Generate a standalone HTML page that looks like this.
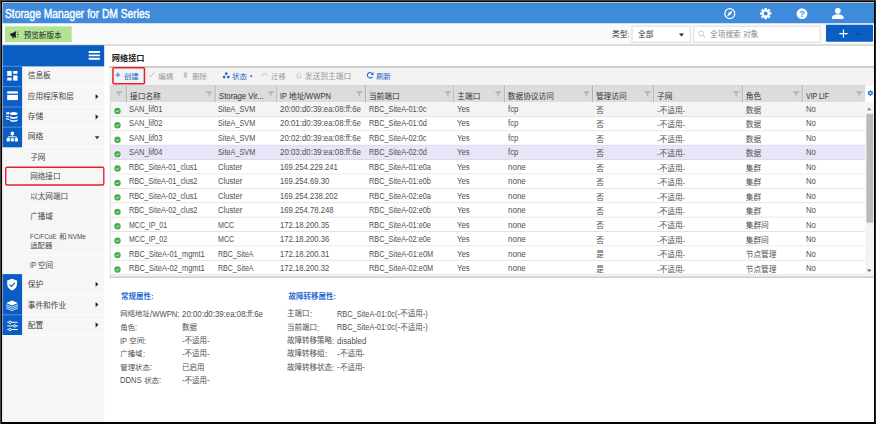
<!DOCTYPE html>
<html lang="zh-CN"><head><meta charset="utf-8"><title>Storage Manager for DM Series</title>
<style>
html,body{margin:0;padding:0;}
body{width:876px;height:424px;overflow:hidden;background:#000;position:relative;
 font-family:"Liberation Sans","Noto Sans CJK SC",sans-serif;font-size:8px;color:#505050;}
#app *{position:absolute;box-sizing:border-box;white-space:nowrap;}
#app{position:absolute;left:2px;top:2px;width:872px;height:420px;background:#fff;overflow:hidden;}
#app .t{line-height:12px;height:12px;}
#b0{position:absolute;left:0;top:0;width:876px;height:1px;background:#454545;}
#b1{position:absolute;left:0;top:0;width:1px;height:424px;background:#454545;}
#b2{position:absolute;left:875px;top:0;width:1px;height:423px;background:#262626;}
</style></head><body><div id="b0"></div><div id="b1"></div><div id="b2"></div><div id="app">
<svg style="left:0;top:0" width="872" height="420" viewBox="2 2 872 420">
<rect x="2" y="2" width="872" height="21.5" rx="0" fill="#3f8bdb"/>
<rect x="2" y="2" width="872" height="1" rx="0" fill="#c3c9d0"/>
<rect x="2" y="3" width="872" height="1" rx="0" fill="#3886dc"/>
<rect x="2" y="23.5" width="872" height="21" rx="0" fill="#fafafa"/>
<rect x="5" y="26.3" width="66.7" height="15.8" rx="0" fill="#b2e394"/>
<g transform="translate(10.3 30.3)"><path d="M.2 3h2L5.500 .6v7.200L2.200 5.600H.2z" fill="#1a1a1a"/><path d="M2.400 5.600l.6 2.400" stroke="#1a1a1a" stroke-width="1.200"/><path d="M6.600 2.300l1.400-.9M6.800 4.200h1.800M6.600 6.100l1.400.9" stroke="#333" stroke-width=".8" fill="none"/></g>
<rect x="632" y="26.2" width="58.2" height="16" rx="0" fill="#fff" stroke="#dcdcdc" stroke-width="1"/>
<g transform="translate(679 33.4)"><path d="M0 0h5l-2.500 3z" fill="#222"/></g>
<rect x="693.8" y="26.2" width="126.4" height="16" rx="0" fill="#fff" stroke="#dcdcdc" stroke-width="1"/>
<g transform="translate(698 30.3)"><circle cx="3.200" cy="3.200" r="2.500" fill="none" stroke="#bbb" stroke-width=".8"/><path d="M5 5L7.500 7.500" stroke="#bbb" stroke-width=".8"/></g>
<rect x="826" y="24.7" width="47" height="17" rx="1" fill="#0a5dc2"/>
<g transform="translate(839 29.1)"><path d="M4.500 .3v8.400M.3 4.500h8.400" stroke="#fff" stroke-width="1.200"/></g>
<g transform="translate(855.4 33)"><path d="M0 0h4.400l-2.200 2.600z" fill="#26426a"/></g>
<rect x="2" y="44.2" width="872" height="1.7" rx="0" fill="#d8d8d8"/>
<rect x="2" y="45.4" width="102.2" height="377" rx="0" fill="#f6f6f6"/>
<rect x="2" y="45.2" width="102.2" height="21.2" rx="0" fill="#0a5dc2"/>
<g transform="translate(88.7 51)"><path d="M0 1h11.200M0 4.400h11.200M0 7.800h11.200" stroke="#fff" stroke-width="1.900"/></g>
<rect x="2" y="66.1" width="20.1" height="20.9" rx="0" fill="#0a5dc2"/>
<rect x="2" y="65.7" width="20.1" height="1.2" rx="0" fill="#4587d6"/>
<rect x="22.1" y="85.6" width="82.1" height="1" rx="0" fill="#fdfdfd"/>
<rect x="2" y="86.4" width="20.1" height="20.9" rx="0" fill="#0a5dc2"/>
<rect x="2" y="86" width="20.1" height="1.2" rx="0" fill="#4587d6"/>
<rect x="22.1" y="105.9" width="82.1" height="1" rx="0" fill="#fdfdfd"/>
<g transform="translate(95.6 93.95)"><path d="M0 0l2.800 2.600L0 5.200z" fill="#222"/></g>
<rect x="2" y="106.7" width="20.1" height="20.9" rx="0" fill="#0a5dc2"/>
<rect x="2" y="106.3" width="20.1" height="1.2" rx="0" fill="#4587d6"/>
<rect x="22.1" y="126.2" width="82.1" height="1" rx="0" fill="#fdfdfd"/>
<g transform="translate(95.6 114.25)"><path d="M0 0l2.800 2.600L0 5.200z" fill="#222"/></g>
<rect x="2" y="127" width="20.1" height="20.3" rx="0" fill="#0a5dc2"/>
<rect x="2" y="126.6" width="20.1" height="1.2" rx="0" fill="#4587d6"/>
<rect x="22.1" y="146.5" width="82.1" height="1" rx="0" fill="#fdfdfd"/>
<g transform="translate(94.8 136.35)"><path d="M0 0h4.600l-2.300 2.800z" fill="#333"/></g>
<rect x="2" y="274.1" width="20.1" height="20.9" rx="0" fill="#0a5dc2"/>
<rect x="22.1" y="293.6" width="82.1" height="1" rx="0" fill="#fdfdfd"/>
<g transform="translate(95.6 281.65)"><path d="M0 0l2.800 2.600L0 5.200z" fill="#222"/></g>
<rect x="2" y="294.4" width="20.1" height="20.9" rx="0" fill="#0a5dc2"/>
<rect x="22.1" y="313.9" width="82.1" height="1" rx="0" fill="#fdfdfd"/>
<g transform="translate(95.6 301.95)"><path d="M0 0l2.800 2.600L0 5.200z" fill="#222"/></g>
<rect x="2" y="314.6" width="20.1" height="20.4" rx="0" fill="#0a5dc2"/>
<rect x="2" y="314.2" width="20.1" height="1.2" rx="0" fill="#4587d6"/>
<rect x="22.1" y="334.2" width="82.1" height="1" rx="0" fill="#fdfdfd"/>
<g transform="translate(95.6 322.2)"><path d="M0 0l2.800 2.600L0 5.200z" fill="#222"/></g>
<rect x="22.1" y="166.5" width="82.1" height="1" rx="0" fill="#fcfcfc"/>
<rect x="22.1" y="186.2" width="82.1" height="1" rx="0" fill="#fcfcfc"/>
<rect x="22.1" y="205.9" width="82.1" height="1" rx="0" fill="#fcfcfc"/>
<rect x="22.1" y="225.6" width="82.1" height="1" rx="0" fill="#fcfcfc"/>
<rect x="22.1" y="254.6" width="82.1" height="1" rx="0" fill="#fcfcfc"/>
<rect x="5.7" y="167.2" width="98.1" height="17.8" rx="1.500" fill="none" stroke="#e8202a" stroke-width="1.4"/>
<rect x="109" y="67.2" width="765" height="18.5" rx="0" fill="#f3f3f3"/>
<rect x="109" y="65.9" width="765" height="2" rx="0" fill="#cdcdcd"/>
<rect x="112.95" y="67.75" width="31.5" height="16" rx="1" fill="none" stroke="#e8202a" stroke-width="1.5"/>
<g transform="translate(115.6 72.6)"><path d="M2.300 0v4.600M0 2.300h4.600" stroke="#2a78d8" stroke-width="1"/></g>
<g transform="translate(149 72)"><path d="M.5 5.500L5.500 .5" stroke="#bbb" stroke-width="1"/></g>
<g transform="translate(183.5 72)"><rect x=".3" y=".3" width="3.400" height="5.400" fill="#c4c4c4"/></g>
<g transform="translate(222.6 72.2)"><g fill="#1a6fd0"><circle cx="3.600" cy="1.500" r="1.400"/><circle cx="1.500" cy="4.900" r="1.400"/><circle cx="5.700" cy="4.900" r="1.400"/></g></g>
<g transform="translate(249.7 75.5)"><path d="M0 0h3l-1.500 2z" fill="#1560c0"/></g>
<g transform="translate(262 72.5)"><path d="M.5 4.500V1.500h4.500v2" stroke="#c8c8c8" stroke-width=".9" fill="none"/></g>
<g transform="translate(296 72.3)"><path d="M.3 3L3 .5 5.700 3M1.200 2.800v2.700h3.600V2.800" stroke="#c0c0c0" stroke-width=".8" fill="none"/></g>
<g transform="translate(366.5 71.7)"><path d="M5.900 4.900a2.700 2.700 0 1 1-.1-2.900" stroke="#1a6fd0" stroke-width="1.100" fill="none"/><path d="M7 .4v2.800H4.200z" fill="#1a6fd0"/></g>
<rect x="110.3" y="85.5" width="763.2" height="191.8" rx="0" fill="#fff" stroke="#d2d2d2" stroke-width="1"/>
<rect x="110.8" y="85.6" width="754.6" height="16.7" rx="0" fill="#dcdcdc"/>
<g transform="translate(115.2 91.2)"><path d="M0 0h7.400L4.400 2.900v2.300L3 4.500V2.900z" fill="#b4b4b4"/></g>
<rect x="126.1" y="85.6" width="1" height="16.7" rx="0" fill="#b0b0b0"/>
<rect x="127.1" y="85.6" width="0.8" height="16.7" rx="0" fill="#e6e6e6"/>
<g transform="translate(205.5 91.2)"><path d="M0 0h7.400L4.400 2.900v2.300L3 4.500V2.900z" fill="#b4b4b4"/></g>
<rect x="214.8" y="85.6" width="1" height="16.7" rx="0" fill="#b0b0b0"/>
<rect x="215.8" y="85.6" width="0.8" height="16.7" rx="0" fill="#e6e6e6"/>
<g transform="translate(267.1 91.2)"><path d="M0 0h7.400L4.400 2.900v2.300L3 4.500V2.900z" fill="#b4b4b4"/></g>
<rect x="276.4" y="85.6" width="1" height="16.7" rx="0" fill="#b0b0b0"/>
<rect x="277.4" y="85.6" width="0.8" height="16.7" rx="0" fill="#e6e6e6"/>
<g transform="translate(355.7 91.2)"><path d="M0 0h7.400L4.400 2.900v2.300L3 4.500V2.900z" fill="#b4b4b4"/></g>
<rect x="365" y="85.6" width="1" height="16.7" rx="0" fill="#b0b0b0"/>
<rect x="366" y="85.6" width="0.8" height="16.7" rx="0" fill="#e6e6e6"/>
<g transform="translate(444.1 91.2)"><path d="M0 0h7.400L4.400 2.900v2.300L3 4.500V2.900z" fill="#b4b4b4"/></g>
<rect x="453.4" y="85.6" width="1" height="16.7" rx="0" fill="#b0b0b0"/>
<rect x="454.4" y="85.6" width="0.8" height="16.7" rx="0" fill="#e6e6e6"/>
<g transform="translate(494.6 91.2)"><path d="M0 0h7.400L4.400 2.900v2.300L3 4.500V2.900z" fill="#b4b4b4"/></g>
<rect x="503.9" y="85.6" width="1" height="16.7" rx="0" fill="#b0b0b0"/>
<rect x="504.9" y="85.6" width="0.8" height="16.7" rx="0" fill="#e6e6e6"/>
<g transform="translate(582.7 91.2)"><path d="M0 0h7.400L4.400 2.900v2.300L3 4.500V2.900z" fill="#b4b4b4"/></g>
<rect x="592" y="85.6" width="1" height="16.7" rx="0" fill="#b0b0b0"/>
<rect x="593" y="85.6" width="0.8" height="16.7" rx="0" fill="#e6e6e6"/>
<g transform="translate(643.9 91.2)"><path d="M0 0h7.400L4.400 2.900v2.300L3 4.500V2.900z" fill="#b4b4b4"/></g>
<rect x="653.2" y="85.6" width="1" height="16.7" rx="0" fill="#b0b0b0"/>
<rect x="654.2" y="85.6" width="0.8" height="16.7" rx="0" fill="#e6e6e6"/>
<g transform="translate(732.6 91.2)"><path d="M0 0h7.400L4.400 2.900v2.300L3 4.500V2.900z" fill="#b4b4b4"/></g>
<rect x="741.9" y="85.6" width="1" height="16.7" rx="0" fill="#b0b0b0"/>
<rect x="742.9" y="85.6" width="0.8" height="16.7" rx="0" fill="#e6e6e6"/>
<g transform="translate(792.5 91.2)"><path d="M0 0h7.400L4.400 2.900v2.300L3 4.500V2.900z" fill="#b4b4b4"/></g>
<rect x="801.8" y="85.6" width="1" height="16.7" rx="0" fill="#b0b0b0"/>
<rect x="802.8" y="85.6" width="0.8" height="16.7" rx="0" fill="#e6e6e6"/>
<g transform="translate(855.6 91.2)"><path d="M0 0h7.400L4.400 2.900v2.300L3 4.500V2.900z" fill="#b4b4b4"/></g>
<rect x="865.4" y="85.3" width="8.6" height="17.1" rx="0" fill="#fff"/>
<g transform="translate(870.4 93.1)"><g fill="#1a6fd0"><circle r="1.900"/><rect x="-.75" y="-2.700" width="1.500" height="5.400"/><rect x="-.75" y="-2.700" width="1.500" height="5.400" transform="rotate(60)"/><rect x="-.75" y="-2.700" width="1.500" height="5.400" transform="rotate(120)"/></g><circle r=".9" fill="#fff"/></g>
<rect x="110.8" y="102.6" width="754.6" height="14.38" rx="0" fill="#f4f4f4"/>
<rect x="110.8" y="116.08" width="754.6" height="1" rx="0" fill="#e0e0e0"/>
<g transform="translate(114.6 107.99)"><circle cx="2.900" cy="2.900" r="3.900" fill="#fff" opacity=".8"/><circle cx="2.900" cy="2.900" r="3.200" fill="#43ad4b"/><path d="M1.500 3l1 1 1.800-2" stroke="#fff" stroke-width=".8" fill="none"/></g>
<rect x="110.8" y="116.98" width="754.6" height="14.38" rx="0" fill="#fff"/>
<rect x="110.8" y="130.46" width="754.6" height="1" rx="0" fill="#e0e0e0"/>
<g transform="translate(114.6 122.41)"><circle cx="2.900" cy="2.900" r="3.900" fill="#fff" opacity=".8"/><circle cx="2.900" cy="2.900" r="3.200" fill="#43ad4b"/><path d="M1.500 3l1 1 1.800-2" stroke="#fff" stroke-width=".8" fill="none"/></g>
<rect x="110.8" y="131.36" width="754.6" height="14.38" rx="0" fill="#fff"/>
<rect x="110.8" y="144.84" width="754.6" height="1" rx="0" fill="#d9d5e8"/>
<g transform="translate(114.6 136.83)"><circle cx="2.900" cy="2.900" r="3.900" fill="#fff" opacity=".8"/><circle cx="2.900" cy="2.900" r="3.200" fill="#43ad4b"/><path d="M1.500 3l1 1 1.800-2" stroke="#fff" stroke-width=".8" fill="none"/></g>
<rect x="110.8" y="145.74" width="754.6" height="14.38" rx="0" fill="#e9e5f8"/>
<rect x="110.8" y="159.22" width="754.6" height="1" rx="0" fill="#d9d5e8"/>
<g transform="translate(114.6 151.25)"><circle cx="2.900" cy="2.900" r="3.900" fill="#fff" opacity=".8"/><circle cx="2.900" cy="2.900" r="3.200" fill="#43ad4b"/><path d="M1.500 3l1 1 1.800-2" stroke="#fff" stroke-width=".8" fill="none"/></g>
<rect x="110.8" y="160.12" width="754.6" height="14.38" rx="0" fill="#fff"/>
<rect x="110.8" y="173.6" width="754.6" height="1" rx="0" fill="#e0e0e0"/>
<g transform="translate(114.6 165.67)"><circle cx="2.900" cy="2.900" r="3.900" fill="#fff" opacity=".8"/><circle cx="2.900" cy="2.900" r="3.200" fill="#43ad4b"/><path d="M1.500 3l1 1 1.800-2" stroke="#fff" stroke-width=".8" fill="none"/></g>
<rect x="110.8" y="174.5" width="754.6" height="14.38" rx="0" fill="#fff"/>
<rect x="110.8" y="187.98" width="754.6" height="1" rx="0" fill="#e0e0e0"/>
<g transform="translate(114.6 180.09)"><circle cx="2.900" cy="2.900" r="3.900" fill="#fff" opacity=".8"/><circle cx="2.900" cy="2.900" r="3.200" fill="#43ad4b"/><path d="M1.500 3l1 1 1.800-2" stroke="#fff" stroke-width=".8" fill="none"/></g>
<rect x="110.8" y="188.88" width="754.6" height="14.38" rx="0" fill="#fff"/>
<rect x="110.8" y="202.36" width="754.6" height="1" rx="0" fill="#e0e0e0"/>
<g transform="translate(114.6 194.51)"><circle cx="2.900" cy="2.900" r="3.900" fill="#fff" opacity=".8"/><circle cx="2.900" cy="2.900" r="3.200" fill="#43ad4b"/><path d="M1.500 3l1 1 1.800-2" stroke="#fff" stroke-width=".8" fill="none"/></g>
<rect x="110.8" y="203.26" width="754.6" height="14.38" rx="0" fill="#fff"/>
<rect x="110.8" y="216.74" width="754.6" height="1" rx="0" fill="#e0e0e0"/>
<g transform="translate(114.6 208.93)"><circle cx="2.900" cy="2.900" r="3.900" fill="#fff" opacity=".8"/><circle cx="2.900" cy="2.900" r="3.200" fill="#43ad4b"/><path d="M1.500 3l1 1 1.800-2" stroke="#fff" stroke-width=".8" fill="none"/></g>
<rect x="110.8" y="217.64" width="754.6" height="14.38" rx="0" fill="#fff"/>
<rect x="110.8" y="231.12" width="754.6" height="1" rx="0" fill="#e0e0e0"/>
<g transform="translate(114.6 223.35)"><circle cx="2.900" cy="2.900" r="3.900" fill="#fff" opacity=".8"/><circle cx="2.900" cy="2.900" r="3.200" fill="#43ad4b"/><path d="M1.500 3l1 1 1.800-2" stroke="#fff" stroke-width=".8" fill="none"/></g>
<rect x="110.8" y="232.02" width="754.6" height="14.38" rx="0" fill="#fff"/>
<rect x="110.8" y="245.5" width="754.6" height="1" rx="0" fill="#e0e0e0"/>
<g transform="translate(114.6 237.77)"><circle cx="2.900" cy="2.900" r="3.900" fill="#fff" opacity=".8"/><circle cx="2.900" cy="2.900" r="3.200" fill="#43ad4b"/><path d="M1.500 3l1 1 1.800-2" stroke="#fff" stroke-width=".8" fill="none"/></g>
<rect x="110.8" y="246.4" width="754.6" height="14.38" rx="0" fill="#fff"/>
<rect x="110.8" y="259.88" width="754.6" height="1" rx="0" fill="#e0e0e0"/>
<g transform="translate(114.6 252.19)"><circle cx="2.900" cy="2.900" r="3.900" fill="#fff" opacity=".8"/><circle cx="2.900" cy="2.900" r="3.200" fill="#43ad4b"/><path d="M1.500 3l1 1 1.800-2" stroke="#fff" stroke-width=".8" fill="none"/></g>
<rect x="110.8" y="260.78" width="754.6" height="14.38" rx="0" fill="#fff"/>
<rect x="110.8" y="274.26" width="754.6" height="1" rx="0" fill="#e0e0e0"/>
<g transform="translate(114.6 266.61)"><circle cx="2.900" cy="2.900" r="3.900" fill="#fff" opacity=".8"/><circle cx="2.900" cy="2.900" r="3.200" fill="#43ad4b"/><path d="M1.500 3l1 1 1.800-2" stroke="#fff" stroke-width=".8" fill="none"/></g>
<rect x="865.4" y="102.3" width="8.6" height="174.7" rx="0" fill="#f3f3f3"/>
<rect x="866.4" y="113.8" width="6.8" height="108.9" rx="0" fill="#b9b9b9"/>
<g transform="translate(867 107.8)"><path d="M0 2.400h4.400L2.200 0z" fill="#808080"/></g>
<g transform="translate(867 269.5)"><path d="M0 0h4.400L2.200 2.400z" fill="#606060"/></g>
<rect x="109.8" y="276.3" width="764.2" height="1.5" rx="0" fill="#cfcfcf"/>
<rect x="2" y="3" width="1" height="419" fill="#d6d6d6" opacity=".55"/>
</svg>
<span class="t" style="left:3.3px;top:4.6px;height:14px;line-height:14px;font-size:12.4px;color:#fff;-webkit-text-stroke:.4px #fff;transform:scaleX(0.828);transform-origin:0 50%;">Storage Manager for DM Series</span>
<svg style="left:0;top:0" width="872" height="24" viewBox="2 2 872 24">
<circle cx="729.800" cy="13.600" r="5" fill="none" stroke="#fff" stroke-width="1.200"/>
<path d="M732.600 10.800 L730.800 14.600 L727 16.400 L728.800 12.600 Z" fill="#fff"/>
<g transform="translate(765.700 13.600)" fill="#fff"><circle r="4.200"/><rect x="-1.250" y="-5.700" width="2.500" height="11.400" rx=".5"/><rect x="-1.250" y="-5.700" width="2.500" height="11.400" rx=".5" transform="rotate(45)"/><rect x="-1.250" y="-5.700" width="2.500" height="11.400" rx=".5" transform="rotate(90)"/><rect x="-1.250" y="-5.700" width="2.500" height="11.400" rx=".5" transform="rotate(135)"/><circle r="2" fill="#3f8bdb"/></g>
<circle cx="802" cy="13.700" r="5.400" fill="#fff"/>
<text x="802" y="17" font-size="9" font-weight="bold" text-anchor="middle" fill="#3f8bdb" font-family="Liberation Sans, sans-serif">?</text>
<circle cx="837.800" cy="10.800" r="2.900" fill="#fff"/>
<path d="M832 18.900 v-1.400 c0-2.200 3.600-3.300 5.800-3.300 s5.800 1.100 5.800 3.300 v1.400 z" fill="#fff"/>
</svg>
<span class="t" style="left:21.7px;top:27.6px;font-size:7.6px;color:#222;">预览新版本</span>
<span class="t" style="left:610px;top:27.3px;font-size:7.7px;color:#333;">类型:</span>
<span class="t" style="left:636px;top:27.3px;font-size:7.7px;color:#333;">全部</span>
<span class="t" style="left:708px;top:27.3px;font-size:7.7px;color:#888;">全项搜索 对象</span>
<span class="t" style="left:25.7px;top:68.25px;font-size:7.7px;color:#444;">信息板</span>
<span class="t" style="left:25.7px;top:88.55px;font-size:7.7px;color:#444;">应用程序和层</span>
<span class="t" style="left:25.7px;top:108.85px;font-size:7.7px;color:#444;">存储</span>
<span class="t" style="left:25.7px;top:129.15px;font-size:7.7px;color:#444;">网络</span>
<span class="t" style="left:25.7px;top:277.25px;font-size:7.7px;color:#444;">保护</span>
<span class="t" style="left:25.7px;top:297.55px;font-size:7.7px;color:#444;">事件和作业</span>
<span class="t" style="left:25.7px;top:317.8px;font-size:7.7px;color:#444;">配置</span>
<span class="t" style="left:28.2px;top:150.2px;font-size:7.6px;color:#4a4a4a;">子网</span>
<span class="t" style="left:28.2px;top:169.2px;font-size:7.6px;color:#4a4a4a;">网络接口</span>
<span class="t" style="left:28.2px;top:189.3px;font-size:7.6px;color:#4a4a4a;">以太网端口</span>
<span class="t" style="left:28.2px;top:209.3px;font-size:7.6px;color:#4a4a4a;">广播域</span>
<span class="t" style="left:36px;top:257.7px;font-size:7.6px;color:#4a4a4a;">空间</span>
<span class="t" style="left:28.2px;top:257.3px;font-size:8.5px;transform:scaleX(0.767);transform-origin:0 50%;color:#4a4a4a;">IP</span>
<span class="t" style="left:28.2px;top:228.6px;font-size:8px;transform:scaleX(0.796);transform-origin:0 50%;color:#4a4a4a;">FC/FCoE</span>
<span class="t" style="left:57.2px;top:229px;font-size:7.3px;color:#4a4a4a;">和</span>
<span class="t" style="left:65.7px;top:228.6px;font-size:8px;transform:scaleX(0.807);transform-origin:0 50%;color:#4a4a4a;">NVMe</span>
<span class="t" style="left:28.2px;top:237.6px;font-size:7.4px;color:#4a4a4a;">适配器</span>
<svg style="left:0;top:0" width="24" height="420" viewBox="2 2 24 420">
<g fill="#fff">
<rect x="7.200" y="71" width="4.500" height="4.900"/><rect x="13.200" y="71" width="4.300" height="2.800"/><rect x="7.200" y="77.600" width="4.500" height="3"/><rect x="13.200" y="75.400" width="4.300" height="5.200"/>
<rect x="7.200" y="91.300" width="10.800" height="2.300"/><rect x="7.200" y="94.900" width="10.800" height="5.200"/>
<g opacity=".92"><ellipse cx="8.600" cy="113.300" rx="2.700" ry="1.200"/><path d="M5.900 114.900c0 1.500 5.400 1.500 5.400 0v1.300c0 1.500-5.400 1.500-5.400 0z"/><path d="M5.900 117.500c0 1.500 5.400 1.500 5.400 0v1.300c0 1.500-5.400 1.500-5.400 0z"/></g>
<path d="M9.400 111h8.600v10.500h-8.600z" fill="#0a5dc2"/>
<ellipse cx="13.800" cy="113.500" rx="3.800" ry="1.600"/><path d="M10 115.600c0 2.100 7.600 2.100 7.600 0v1.700c0 2.100-7.600 2.100-7.600 0z"/><path d="M10 118.700c0 2.100 7.600 2.100 7.600 0v1.500c0 2.100-7.600 2.100-7.600 0z"/>
<rect x="10.700" y="131.800" width="3.200" height="3.200"/><rect x="6.600" y="138.200" width="3.200" height="3.200"/><rect x="10.700" y="138.200" width="3.200" height="3.200"/><rect x="14.800" y="138.200" width="3.200" height="3.200"/>
<path d="M12.100 278.700l4.900 1.900v3.400c0 3-2.100 5.500-4.900 6.400c-2.800-.9-4.900-3.400-4.900-6.400v-3.400z"/>
<path d="M12.100 300.400l5.900 2.500-5.900 2.500-5.900-2.500z"/>
</g>
<path d="M12.300 135v2M8.200 138.200v-1.400h8.200v1.400" stroke="#fff" stroke-width=".9" fill="none"/>
<path d="M9.700 284.600l1.800 1.800 3.200-3.500" stroke="#0a5dc2" stroke-width="1.200" fill="none"/>
<path d="M6.200 304.700l5.900 2.500 5.900-2.500M6.200 306.400l5.900 2.500 5.900-2.500M6.200 308.100l5.900 2.500 5.900-2.500" stroke="#fff" stroke-width=".8" fill="none"/>
<path d="M7.200 322.300h10.500M7.200 325.900h10.500M7.200 329.500h10.500" stroke="#fff" stroke-width="1" fill="none"/>
<g fill="#0a5dc2" stroke="#fff" stroke-width=".9"><circle cx="10" cy="322.300" r="1.250"/><circle cx="14.800" cy="325.900" r="1.250"/><circle cx="10" cy="329.500" r="1.250"/></g>
</svg>
<span class="t" style="left:109.8px;top:51.4px;font-size:8.2px;font-weight:bold;color:#222;">网络接口</span>
<span class="t" style="left:121.9px;top:68.7px;font-size:7.4px;color:#1560c0;">创建</span>
<span class="t" style="left:156.3px;top:68.7px;font-size:7.4px;color:#999;">编辑</span>
<span class="t" style="left:190.2px;top:68.7px;font-size:7.4px;color:#999;">删除</span>
<span class="t" style="left:230px;top:68.7px;font-size:7.4px;color:#1560c0;">状态</span>
<span class="t" style="left:269px;top:68.7px;font-size:7.4px;color:#999;">迁移</span>
<span class="t" style="left:302.7px;top:68.7px;font-size:7.75px;color:#999;">发送到主端口</span>
<span class="t" style="left:374.2px;top:68.7px;font-size:7.4px;color:#1560c0;">刷新</span>
<span class="t" style="left:128px;top:89.4px;font-size:7.7px;color:#333;">接口名称</span>
<span class="t" style="left:216.7px;top:88.4px;font-size:9.6px;transform:scaleX(0.808);transform-origin:0 50%;color:#333;">Storage Vir...</span>
<span class="t" style="left:278.3px;top:88.4px;font-size:9.6px;transform:scaleX(0.756);transform-origin:0 50%;color:#333;">IP </span>
<span class="t" style="left:287.04px;top:89.4px;font-size:7.7px;color:#333;">地址</span>
<span class="t" style="left:302.44px;top:88.4px;font-size:9.6px;transform:scaleX(0.789);transform-origin:0 50%;color:#333;">/WWPN</span>
<span class="t" style="left:366.9px;top:89.4px;font-size:7.7px;color:#333;">当前端口</span>
<span class="t" style="left:455.3px;top:89.4px;font-size:7.7px;color:#333;">主端口</span>
<span class="t" style="left:505.8px;top:89.4px;font-size:7.7px;color:#333;">数据协议访问</span>
<span class="t" style="left:593.9px;top:89.4px;font-size:7.7px;color:#333;">管理访问</span>
<span class="t" style="left:655.1px;top:89.4px;font-size:7.7px;color:#333;">子网</span>
<span class="t" style="left:743.8px;top:89.4px;font-size:7.7px;color:#333;">角色</span>
<span class="t" style="left:803.7px;top:88.4px;font-size:9.6px;transform:scaleX(0.723);transform-origin:0 50%;color:#333;">VIP LIF</span>
<span class="t" style="left:127.1px;top:100.99px;font-size:9.6px;transform:scaleX(0.783);transform-origin:0 50%;">SAN_lif01</span>
<span class="t" style="left:216.3px;top:100.99px;font-size:9.6px;transform:scaleX(0.760);transform-origin:0 50%;">SiteA_SVM</span>
<span class="t" style="left:277.9px;top:100.99px;font-size:9.6px;transform:scaleX(0.822);transform-origin:0 50%;">20:00:d0:39:ea:08:ff:6e</span>
<span class="t" style="left:366.7px;top:100.99px;font-size:9.6px;transform:scaleX(0.764);transform-origin:0 50%;">RBC_SiteA-01:0c</span>
<span class="t" style="left:455.4px;top:100.99px;font-size:9.6px;transform:scaleX(0.805);transform-origin:0 50%;">Yes</span>
<span class="t" style="left:506.2px;top:100.99px;font-size:9.6px;transform:scaleX(0.810);transform-origin:0 50%;">fcp</span>
<span class="t" style="left:594.2px;top:102.89px;font-size:7.7px;">否</span>
<span class="t" style="left:655px;top:102.89px;font-size:7.7px;">-不适用-</span>
<span class="t" style="left:743.7px;top:102.89px;font-size:7.7px;">数据</span>
<span class="t" style="left:803.6px;top:100.99px;font-size:9.6px;transform:scaleX(0.809);transform-origin:0 50%;">No</span>
<span class="t" style="left:127.1px;top:115.46px;font-size:9.6px;transform:scaleX(0.783);transform-origin:0 50%;">SAN_lif02</span>
<span class="t" style="left:216.3px;top:115.46px;font-size:9.6px;transform:scaleX(0.760);transform-origin:0 50%;">SiteA_SVM</span>
<span class="t" style="left:277.9px;top:115.46px;font-size:9.6px;transform:scaleX(0.822);transform-origin:0 50%;">20:01:d0:39:ea:08:ff:6e</span>
<span class="t" style="left:366.7px;top:115.46px;font-size:9.6px;transform:scaleX(0.764);transform-origin:0 50%;">RBC_SiteA-01:0d</span>
<span class="t" style="left:455.4px;top:115.46px;font-size:9.6px;transform:scaleX(0.805);transform-origin:0 50%;">Yes</span>
<span class="t" style="left:506.2px;top:115.46px;font-size:9.6px;transform:scaleX(0.810);transform-origin:0 50%;">fcp</span>
<span class="t" style="left:594.2px;top:117.34px;font-size:7.7px;">否</span>
<span class="t" style="left:655px;top:117.34px;font-size:7.7px;">-不适用-</span>
<span class="t" style="left:743.7px;top:117.34px;font-size:7.7px;">数据</span>
<span class="t" style="left:803.6px;top:115.46px;font-size:9.6px;transform:scaleX(0.809);transform-origin:0 50%;">No</span>
<span class="t" style="left:127.1px;top:129.93px;font-size:9.6px;transform:scaleX(0.783);transform-origin:0 50%;">SAN_lif03</span>
<span class="t" style="left:216.3px;top:129.93px;font-size:9.6px;transform:scaleX(0.760);transform-origin:0 50%;">SiteA_SVM</span>
<span class="t" style="left:277.9px;top:129.93px;font-size:9.6px;transform:scaleX(0.822);transform-origin:0 50%;">20:02:d0:39:ea:08:ff:6e</span>
<span class="t" style="left:366.7px;top:129.93px;font-size:9.6px;transform:scaleX(0.764);transform-origin:0 50%;">RBC_SiteA-02:0c</span>
<span class="t" style="left:455.4px;top:129.93px;font-size:9.6px;transform:scaleX(0.805);transform-origin:0 50%;">Yes</span>
<span class="t" style="left:506.2px;top:129.93px;font-size:9.6px;transform:scaleX(0.810);transform-origin:0 50%;">fcp</span>
<span class="t" style="left:594.2px;top:131.79px;font-size:7.7px;">否</span>
<span class="t" style="left:655px;top:131.79px;font-size:7.7px;">-不适用-</span>
<span class="t" style="left:743.7px;top:131.79px;font-size:7.7px;">数据</span>
<span class="t" style="left:803.6px;top:129.93px;font-size:9.6px;transform:scaleX(0.809);transform-origin:0 50%;">No</span>
<span class="t" style="left:127.1px;top:144.4px;font-size:9.6px;transform:scaleX(0.783);transform-origin:0 50%;">SAN_lif04</span>
<span class="t" style="left:216.3px;top:144.4px;font-size:9.6px;transform:scaleX(0.760);transform-origin:0 50%;">SiteA_SVM</span>
<span class="t" style="left:277.9px;top:144.4px;font-size:9.6px;transform:scaleX(0.822);transform-origin:0 50%;">20:03:d0:39:ea:08:ff:6e</span>
<span class="t" style="left:366.7px;top:144.4px;font-size:9.6px;transform:scaleX(0.764);transform-origin:0 50%;">RBC_SiteA-02:0d</span>
<span class="t" style="left:455.4px;top:144.4px;font-size:9.6px;transform:scaleX(0.805);transform-origin:0 50%;">Yes</span>
<span class="t" style="left:506.2px;top:144.4px;font-size:9.6px;transform:scaleX(0.810);transform-origin:0 50%;">fcp</span>
<span class="t" style="left:594.2px;top:146.24px;font-size:7.7px;">否</span>
<span class="t" style="left:655px;top:146.24px;font-size:7.7px;">-不适用-</span>
<span class="t" style="left:743.7px;top:146.24px;font-size:7.7px;">数据</span>
<span class="t" style="left:803.6px;top:144.4px;font-size:9.6px;transform:scaleX(0.809);transform-origin:0 50%;">No</span>
<span class="t" style="left:127.1px;top:158.87px;font-size:9.6px;transform:scaleX(0.759);transform-origin:0 50%;">RBC_SiteA-01_clus1</span>
<span class="t" style="left:216.3px;top:158.87px;font-size:9.6px;transform:scaleX(0.799);transform-origin:0 50%;">Cluster</span>
<span class="t" style="left:277.9px;top:158.87px;font-size:9.6px;transform:scaleX(0.802);transform-origin:0 50%;">169.254.229.241</span>
<span class="t" style="left:366.7px;top:158.87px;font-size:9.6px;transform:scaleX(0.764);transform-origin:0 50%;">RBC_SiteA-01:e0a</span>
<span class="t" style="left:455.4px;top:158.87px;font-size:9.6px;transform:scaleX(0.805);transform-origin:0 50%;">Yes</span>
<span class="t" style="left:506.2px;top:158.87px;font-size:9.6px;transform:scaleX(0.833);transform-origin:0 50%;">none</span>
<span class="t" style="left:594.2px;top:160.69px;font-size:7.7px;">否</span>
<span class="t" style="left:655px;top:160.69px;font-size:7.7px;">-不适用-</span>
<span class="t" style="left:743.7px;top:160.69px;font-size:7.7px;">集群</span>
<span class="t" style="left:803.6px;top:158.87px;font-size:9.6px;transform:scaleX(0.809);transform-origin:0 50%;">No</span>
<span class="t" style="left:127.1px;top:173.34px;font-size:9.6px;transform:scaleX(0.759);transform-origin:0 50%;">RBC_SiteA-01_clus2</span>
<span class="t" style="left:216.3px;top:173.34px;font-size:9.6px;transform:scaleX(0.799);transform-origin:0 50%;">Cluster</span>
<span class="t" style="left:277.9px;top:173.34px;font-size:9.6px;transform:scaleX(0.802);transform-origin:0 50%;">169.254.69.30</span>
<span class="t" style="left:366.7px;top:173.34px;font-size:9.6px;transform:scaleX(0.764);transform-origin:0 50%;">RBC_SiteA-01:e0b</span>
<span class="t" style="left:455.4px;top:173.34px;font-size:9.6px;transform:scaleX(0.805);transform-origin:0 50%;">Yes</span>
<span class="t" style="left:506.2px;top:173.34px;font-size:9.6px;transform:scaleX(0.833);transform-origin:0 50%;">none</span>
<span class="t" style="left:594.2px;top:175.14px;font-size:7.7px;">否</span>
<span class="t" style="left:655px;top:175.14px;font-size:7.7px;">-不适用-</span>
<span class="t" style="left:743.7px;top:175.14px;font-size:7.7px;">集群</span>
<span class="t" style="left:803.6px;top:173.34px;font-size:9.6px;transform:scaleX(0.809);transform-origin:0 50%;">No</span>
<span class="t" style="left:127.1px;top:187.81px;font-size:9.6px;transform:scaleX(0.759);transform-origin:0 50%;">RBC_SiteA-02_clus1</span>
<span class="t" style="left:216.3px;top:187.81px;font-size:9.6px;transform:scaleX(0.799);transform-origin:0 50%;">Cluster</span>
<span class="t" style="left:277.9px;top:187.81px;font-size:9.6px;transform:scaleX(0.802);transform-origin:0 50%;">169.254.238.202</span>
<span class="t" style="left:366.7px;top:187.81px;font-size:9.6px;transform:scaleX(0.764);transform-origin:0 50%;">RBC_SiteA-02:e0a</span>
<span class="t" style="left:455.4px;top:187.81px;font-size:9.6px;transform:scaleX(0.805);transform-origin:0 50%;">Yes</span>
<span class="t" style="left:506.2px;top:187.81px;font-size:9.6px;transform:scaleX(0.833);transform-origin:0 50%;">none</span>
<span class="t" style="left:594.2px;top:189.59px;font-size:7.7px;">否</span>
<span class="t" style="left:655px;top:189.59px;font-size:7.7px;">-不适用-</span>
<span class="t" style="left:743.7px;top:189.59px;font-size:7.7px;">集群</span>
<span class="t" style="left:803.6px;top:187.81px;font-size:9.6px;transform:scaleX(0.809);transform-origin:0 50%;">No</span>
<span class="t" style="left:127.1px;top:202.28px;font-size:9.6px;transform:scaleX(0.759);transform-origin:0 50%;">RBC_SiteA-02_clus2</span>
<span class="t" style="left:216.3px;top:202.28px;font-size:9.6px;transform:scaleX(0.799);transform-origin:0 50%;">Cluster</span>
<span class="t" style="left:277.9px;top:202.28px;font-size:9.6px;transform:scaleX(0.802);transform-origin:0 50%;">169.254.78.248</span>
<span class="t" style="left:366.7px;top:202.28px;font-size:9.6px;transform:scaleX(0.764);transform-origin:0 50%;">RBC_SiteA-02:e0b</span>
<span class="t" style="left:455.4px;top:202.28px;font-size:9.6px;transform:scaleX(0.805);transform-origin:0 50%;">Yes</span>
<span class="t" style="left:506.2px;top:202.28px;font-size:9.6px;transform:scaleX(0.833);transform-origin:0 50%;">none</span>
<span class="t" style="left:594.2px;top:204.04px;font-size:7.7px;">否</span>
<span class="t" style="left:655px;top:204.04px;font-size:7.7px;">-不适用-</span>
<span class="t" style="left:743.7px;top:204.04px;font-size:7.7px;">集群</span>
<span class="t" style="left:803.6px;top:202.28px;font-size:9.6px;transform:scaleX(0.809);transform-origin:0 50%;">No</span>
<span class="t" style="left:127.1px;top:216.75px;font-size:9.6px;transform:scaleX(0.730);transform-origin:0 50%;">MCC_IP_01</span>
<span class="t" style="left:216.3px;top:216.75px;font-size:9.6px;transform:scaleX(0.737);transform-origin:0 50%;">MCC</span>
<span class="t" style="left:277.9px;top:216.75px;font-size:9.6px;transform:scaleX(0.802);transform-origin:0 50%;">172.18.200.35</span>
<span class="t" style="left:366.7px;top:216.75px;font-size:9.6px;transform:scaleX(0.764);transform-origin:0 50%;">RBC_SiteA-01:e0e</span>
<span class="t" style="left:455.4px;top:216.75px;font-size:9.6px;transform:scaleX(0.805);transform-origin:0 50%;">Yes</span>
<span class="t" style="left:506.2px;top:216.75px;font-size:9.6px;transform:scaleX(0.833);transform-origin:0 50%;">none</span>
<span class="t" style="left:594.2px;top:218.49px;font-size:7.7px;">否</span>
<span class="t" style="left:655px;top:218.49px;font-size:7.7px;">-不适用-</span>
<span class="t" style="left:743.7px;top:218.49px;font-size:7.7px;">集群间</span>
<span class="t" style="left:803.6px;top:216.75px;font-size:9.6px;transform:scaleX(0.809);transform-origin:0 50%;">No</span>
<span class="t" style="left:127.1px;top:231.22px;font-size:9.6px;transform:scaleX(0.730);transform-origin:0 50%;">MCC_IP_02</span>
<span class="t" style="left:216.3px;top:231.22px;font-size:9.6px;transform:scaleX(0.737);transform-origin:0 50%;">MCC</span>
<span class="t" style="left:277.9px;top:231.22px;font-size:9.6px;transform:scaleX(0.802);transform-origin:0 50%;">172.18.200.36</span>
<span class="t" style="left:366.7px;top:231.22px;font-size:9.6px;transform:scaleX(0.764);transform-origin:0 50%;">RBC_SiteA-02:e0e</span>
<span class="t" style="left:455.4px;top:231.22px;font-size:9.6px;transform:scaleX(0.805);transform-origin:0 50%;">Yes</span>
<span class="t" style="left:506.2px;top:231.22px;font-size:9.6px;transform:scaleX(0.833);transform-origin:0 50%;">none</span>
<span class="t" style="left:594.2px;top:232.94px;font-size:7.7px;">否</span>
<span class="t" style="left:655px;top:232.94px;font-size:7.7px;">-不适用-</span>
<span class="t" style="left:743.7px;top:232.94px;font-size:7.7px;">集群间</span>
<span class="t" style="left:803.6px;top:231.22px;font-size:9.6px;transform:scaleX(0.809);transform-origin:0 50%;">No</span>
<span class="t" style="left:127.1px;top:245.69px;font-size:9.6px;transform:scaleX(0.781);transform-origin:0 50%;">RBC_SiteA-01_mgmt1</span>
<span class="t" style="left:216.3px;top:245.69px;font-size:9.6px;transform:scaleX(0.731);transform-origin:0 50%;">RBC_SiteA</span>
<span class="t" style="left:277.9px;top:245.69px;font-size:9.6px;transform:scaleX(0.802);transform-origin:0 50%;">172.18.200.31</span>
<span class="t" style="left:366.7px;top:245.69px;font-size:9.6px;transform:scaleX(0.766);transform-origin:0 50%;">RBC_SiteA-01:e0M</span>
<span class="t" style="left:455.4px;top:245.69px;font-size:9.6px;transform:scaleX(0.805);transform-origin:0 50%;">Yes</span>
<span class="t" style="left:506.2px;top:245.69px;font-size:9.6px;transform:scaleX(0.833);transform-origin:0 50%;">none</span>
<span class="t" style="left:594.2px;top:247.39px;font-size:7.7px;">是</span>
<span class="t" style="left:655px;top:247.39px;font-size:7.7px;">-不适用-</span>
<span class="t" style="left:743.7px;top:247.39px;font-size:7.7px;">节点管理</span>
<span class="t" style="left:803.6px;top:245.69px;font-size:9.6px;transform:scaleX(0.809);transform-origin:0 50%;">No</span>
<span class="t" style="left:127.1px;top:260.16px;font-size:9.6px;transform:scaleX(0.781);transform-origin:0 50%;">RBC_SiteA-02_mgmt1</span>
<span class="t" style="left:216.3px;top:260.16px;font-size:9.6px;transform:scaleX(0.731);transform-origin:0 50%;">RBC_SiteA</span>
<span class="t" style="left:277.9px;top:260.16px;font-size:9.6px;transform:scaleX(0.802);transform-origin:0 50%;">172.18.200.32</span>
<span class="t" style="left:366.7px;top:260.16px;font-size:9.6px;transform:scaleX(0.766);transform-origin:0 50%;">RBC_SiteA-02:e0M</span>
<span class="t" style="left:455.4px;top:260.16px;font-size:9.6px;transform:scaleX(0.805);transform-origin:0 50%;">Yes</span>
<span class="t" style="left:506.2px;top:260.16px;font-size:9.6px;transform:scaleX(0.833);transform-origin:0 50%;">none</span>
<span class="t" style="left:594.2px;top:261.84px;font-size:7.7px;">是</span>
<span class="t" style="left:655px;top:261.84px;font-size:7.7px;">-不适用-</span>
<span class="t" style="left:743.7px;top:261.84px;font-size:7.7px;">节点管理</span>
<span class="t" style="left:803.6px;top:260.16px;font-size:9.6px;transform:scaleX(0.809);transform-origin:0 50%;">No</span>
<span class="t" style="left:119.1px;top:288.6px;font-size:7.5px;font-weight:bold;color:#1f6ad0;">常规属性:</span>
<span class="t" style="left:286.5px;top:288.6px;font-size:7.5px;font-weight:bold;color:#1f6ad0;">故障转移属性:</span>
<span class="t" style="left:118.3px;top:306.3px;font-size:7.4px;">网络地址</span>
<span class="t" style="left:147.9px;top:305.9px;font-size:9.6px;transform:scaleX(0.801);transform-origin:0 50%;">/WWPN:</span>
<span class="t" style="left:180px;top:305.9px;font-size:9.6px;transform:scaleX(0.822);transform-origin:0 50%;">20:00:d0:39:ea:08:ff:6e</span>
<span class="t" style="left:118.3px;top:319.6px;font-size:7.4px;">角色</span>
<span class="t" style="left:133.1px;top:319.2px;font-size:9.6px;transform:scaleX(0.758);transform-origin:0 50%;">:</span>
<span class="t" style="left:180px;top:319.6px;font-size:7.5px;">数据</span>
<span class="t" style="left:118.3px;top:332.5px;font-size:9.6px;transform:scaleX(0.781);transform-origin:0 50%;">IP </span>
<span class="t" style="left:127.34px;top:332.9px;font-size:7.4px;">空间</span>
<span class="t" style="left:142.14px;top:332.5px;font-size:9.6px;transform:scaleX(0.758);transform-origin:0 50%;">:</span>
<span class="t" style="left:180px;top:332.5px;font-size:9.6px;transform:scaleX(0.818);transform-origin:0 50%;">-</span>
<span class="t" style="left:182.61px;top:332.9px;font-size:7.5px;">不适用</span>
<span class="t" style="left:205.11px;top:332.5px;font-size:9.6px;transform:scaleX(0.818);transform-origin:0 50%;">-</span>
<span class="t" style="left:118.3px;top:346.2px;font-size:7.4px;">广播域</span>
<span class="t" style="left:140.5px;top:345.8px;font-size:9.6px;transform:scaleX(0.758);transform-origin:0 50%;">:</span>
<span class="t" style="left:180px;top:345.8px;font-size:9.6px;transform:scaleX(0.818);transform-origin:0 50%;">-</span>
<span class="t" style="left:182.61px;top:346.2px;font-size:7.5px;">不适用</span>
<span class="t" style="left:205.11px;top:345.8px;font-size:9.6px;transform:scaleX(0.818);transform-origin:0 50%;">-</span>
<span class="t" style="left:118.3px;top:359.5px;font-size:7.4px;">管理状态</span>
<span class="t" style="left:147.9px;top:359.1px;font-size:9.6px;transform:scaleX(0.758);transform-origin:0 50%;">:</span>
<span class="t" style="left:180px;top:359.5px;font-size:7.5px;">已启用</span>
<span class="t" style="left:118.3px;top:372.4px;font-size:9.6px;transform:scaleX(0.800);transform-origin:0 50%;">DDNS </span>
<span class="t" style="left:142.19px;top:372.8px;font-size:7.4px;">状态</span>
<span class="t" style="left:156.99px;top:372.4px;font-size:9.6px;transform:scaleX(0.758);transform-origin:0 50%;">:</span>
<span class="t" style="left:180px;top:372.4px;font-size:9.6px;transform:scaleX(0.818);transform-origin:0 50%;">-</span>
<span class="t" style="left:182.61px;top:372.8px;font-size:7.5px;">不适用</span>
<span class="t" style="left:205.11px;top:372.4px;font-size:9.6px;transform:scaleX(0.818);transform-origin:0 50%;">-</span>
<span class="t" style="left:285px;top:306.3px;font-size:7.5px;">主端口</span>
<span class="t" style="left:307.5px;top:306.3px;font-size:9.6px;transform:scaleX(0.777);transform-origin:0 50%;">:</span>
<span class="t" style="left:335.3px;top:305.9px;font-size:9.6px;transform:scaleX(0.771);transform-origin:0 50%;">RBC_SiteA-01:0c(-</span>
<span class="t" style="left:398.23px;top:306.3px;font-size:7.5px;">不适用</span>
<span class="t" style="left:420.73px;top:305.9px;font-size:9.6px;transform:scaleX(0.739);transform-origin:0 50%;">-)</span>
<span class="t" style="left:285px;top:319.6px;font-size:7.5px;">当前端口</span>
<span class="t" style="left:315px;top:319.6px;font-size:9.6px;transform:scaleX(0.777);transform-origin:0 50%;">:</span>
<span class="t" style="left:335.3px;top:319.2px;font-size:9.6px;transform:scaleX(0.771);transform-origin:0 50%;">RBC_SiteA-01:0c(-</span>
<span class="t" style="left:398.23px;top:319.6px;font-size:7.5px;">不适用</span>
<span class="t" style="left:420.73px;top:319.2px;font-size:9.6px;transform:scaleX(0.739);transform-origin:0 50%;">-)</span>
<span class="t" style="left:285px;top:332.9px;font-size:7.5px;">故障转移策略</span>
<span class="t" style="left:330px;top:332.9px;font-size:9.6px;transform:scaleX(0.777);transform-origin:0 50%;">:</span>
<span class="t" style="left:335.3px;top:332.5px;font-size:9.6px;transform:scaleX(0.822);transform-origin:0 50%;">disabled</span>
<span class="t" style="left:285px;top:346.2px;font-size:7.5px;">故障转移组</span>
<span class="t" style="left:322.5px;top:346.2px;font-size:9.6px;transform:scaleX(0.777);transform-origin:0 50%;">:</span>
<span class="t" style="left:335.3px;top:345.8px;font-size:9.6px;transform:scaleX(0.818);transform-origin:0 50%;">-</span>
<span class="t" style="left:337.91px;top:346.2px;font-size:7.5px;">不适用</span>
<span class="t" style="left:360.41px;top:345.8px;font-size:9.6px;transform:scaleX(0.818);transform-origin:0 50%;">-</span>
<span class="t" style="left:285px;top:359.5px;font-size:7.5px;">故障转移状态</span>
<span class="t" style="left:330px;top:359.5px;font-size:9.6px;transform:scaleX(0.777);transform-origin:0 50%;">:</span>
<span class="t" style="left:335.3px;top:359.1px;font-size:9.6px;transform:scaleX(0.818);transform-origin:0 50%;">-</span>
<span class="t" style="left:337.91px;top:359.5px;font-size:7.5px;">不适用</span>
<span class="t" style="left:360.41px;top:359.1px;font-size:9.6px;transform:scaleX(0.818);transform-origin:0 50%;">-</span>
</div></body></html>
